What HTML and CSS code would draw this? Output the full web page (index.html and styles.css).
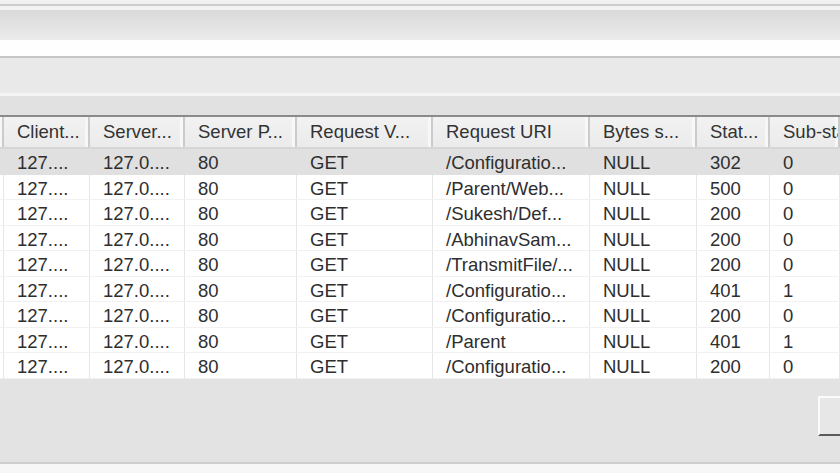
FILE: index.html
```html
<!DOCTYPE html>
<html>
<head>
<meta charset="utf-8">
<link rel="stylesheet" href="styles.css">
</head>
<body>
<div class="window">
  <div class="strip-top"></div>
  <div class="strip-line"></div>
  <div class="strip-pad"></div>
  <div class="toolbar"></div>
  <div class="address"></div>
  <div class="panel"></div>
  <div class="panel-hi"></div>
  <div class="panel2"></div>
  <div class="list">
    <div class="row head">
      <div class="c"></div>
      <div class="c">Client...</div>
      <div class="c">Server...</div>
      <div class="c">Server P...</div>
      <div class="c">Request V...</div>
      <div class="c">Request URI</div>
      <div class="c">Bytes s...</div>
      <div class="c">Stat...</div>
      <div class="c">Sub-sta</div>
    </div>
    <div class="row sel"><div class="c"></div><div class="c">127....</div><div class="c">127.0....</div><div class="c">80</div><div class="c">GET</div><div class="c">/Configuratio...</div><div class="c">NULL</div><div class="c">302</div><div class="c">0</div></div>
    <div class="row"><div class="c"></div><div class="c">127....</div><div class="c">127.0....</div><div class="c">80</div><div class="c">GET</div><div class="c">/Parent/Web...</div><div class="c">NULL</div><div class="c">500</div><div class="c">0</div></div>
    <div class="row"><div class="c"></div><div class="c">127....</div><div class="c">127.0....</div><div class="c">80</div><div class="c">GET</div><div class="c">/Sukesh/Def...</div><div class="c">NULL</div><div class="c">200</div><div class="c">0</div></div>
    <div class="row"><div class="c"></div><div class="c">127....</div><div class="c">127.0....</div><div class="c">80</div><div class="c">GET</div><div class="c">/AbhinavSam...</div><div class="c">NULL</div><div class="c">200</div><div class="c">0</div></div>
    <div class="row"><div class="c"></div><div class="c">127....</div><div class="c">127.0....</div><div class="c">80</div><div class="c">GET</div><div class="c">/TransmitFile/...</div><div class="c">NULL</div><div class="c">200</div><div class="c">0</div></div>
    <div class="row"><div class="c"></div><div class="c">127....</div><div class="c">127.0....</div><div class="c">80</div><div class="c">GET</div><div class="c">/Configuratio...</div><div class="c">NULL</div><div class="c">401</div><div class="c">1</div></div>
    <div class="row"><div class="c"></div><div class="c">127....</div><div class="c">127.0....</div><div class="c">80</div><div class="c">GET</div><div class="c">/Configuratio...</div><div class="c">NULL</div><div class="c">200</div><div class="c">0</div></div>
    <div class="row"><div class="c"></div><div class="c">127....</div><div class="c">127.0....</div><div class="c">80</div><div class="c">GET</div><div class="c">/Parent</div><div class="c">NULL</div><div class="c">401</div><div class="c">1</div></div>
    <div class="row"><div class="c"></div><div class="c">127....</div><div class="c">127.0....</div><div class="c">80</div><div class="c">GET</div><div class="c">/Configuratio...</div><div class="c">NULL</div><div class="c">200</div><div class="c">0</div></div>
  </div>
  <div class="footer">
    <div class="button"></div>
  </div>
  <div class="footer-line"></div>
  <div class="status"></div>
</div>
</body>
</html>
```
FILE: styles.css
```css
html, body {
  margin: 0;
  padding: 0;
  width: 840px;
  height: 473px;
  overflow: hidden;
  background: #f6f6f6;
  font-family: "Liberation Sans", Arial, sans-serif;
}
.window {
  display: flex;
  flex-direction: column;
  width: 840px;
  height: 473px;
}
.strip-top { height: 4px; background: #f1f1f1; }
.strip-line { height: 2px; background: #cdcdcd; }
.strip-pad { height: 4px; background: #f3f3f3; }
.toolbar {
  height: 30px;
  background: linear-gradient(#d9d9d9, #e2e2e2 50%, #ececec);
}
.address { height: 16px; background: #fefefe; }
.panel {
  height: 35px;
  border-top: 2px solid #c6c6c6;
  background: #e9e9e9;
}
.panel-hi { height: 3px; background: #f4f4f4; }
.panel2 { height: 19px; background: #e1e1e1; }
.list {
  display: flex;
  flex-direction: column;
  background: #ffffff;
  border-top: 2px solid #8a8a8a;
}
.row {
  display: grid;
  grid-template-columns: 4px 86px 95px 112px 136px 157px 107px 73px 1fr;
  height: 25.5px;
  font-size: 18.5px;
  color: #2e2e2e;
  border-bottom: 1px solid #f1f1f1;
  box-sizing: border-box;
}
.row .c {
  display: flex;
  align-items: center;
  padding-left: 13px;
  padding-top: 4px;
  white-space: nowrap;
  overflow: hidden;
  border-right: 1px solid #e6e6e6;
}
.row .c:first-child { padding-left: 0; }
.row.head {
  height: 32px;
  background: linear-gradient(#f2f2f2, #ebebeb);
  border-bottom: 2px solid #d6d6d6;
  color: #333333;
}
.row.head .c {
  padding-top: 0;
  border-right: 2px solid #cbcbcb;
  box-shadow: inset -3px 0 0 #f7f7f7;
}
.row.sel { background: #e0e0e0; border-bottom-color: #e0e0e0; }
.row.sel .c { border-right-color: #e0e0e0; }
.footer {
  height: 83px;
  background: #e3e3e3;
  display: flex;
  justify-content: flex-end;
  align-items: flex-start;
  padding-top: 17px;
  box-sizing: border-box;
}
.button {
  width: 22px;
  height: 40px;
  box-sizing: border-box;
  border-left: 2px solid #fbfbfb;
  border-top: 2px solid #fbfbfb;
  border-bottom: 2px solid #5a5a5a;
  background: #e7e7e7;
}
.footer-line { height: 2px; background: #cfcfcf; }
.status { flex: 1; background: #f7f7f7; }
```
